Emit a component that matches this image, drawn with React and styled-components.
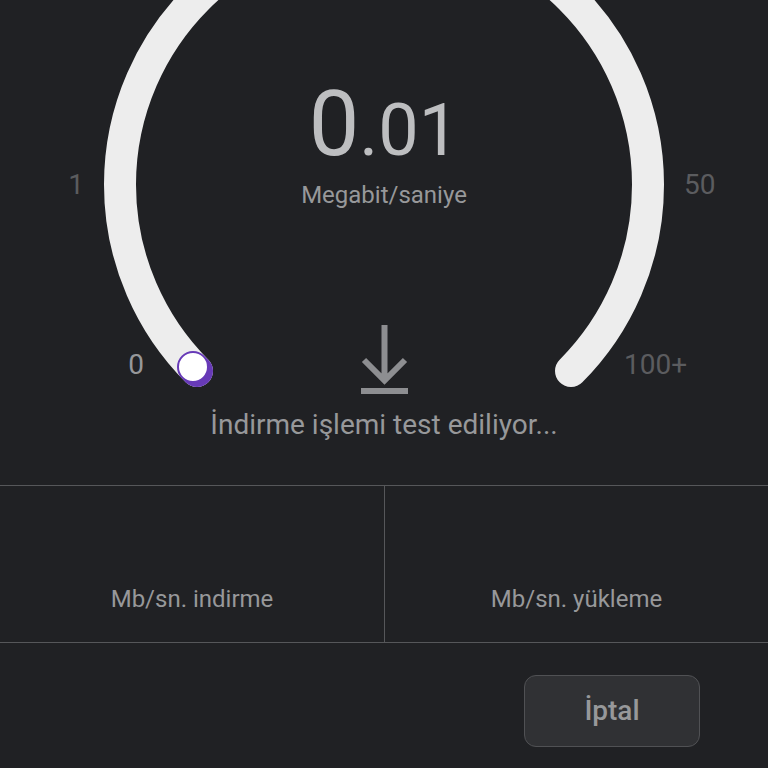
import styled, { createGlobalStyle } from 'styled-components'

const GlobalStyle = createGlobalStyle`
    * {
        box-sizing: border-box;
    }

    body {
        margin: 0;
        background-color: #202124;
        color: #97989a;
        font-family: Roboto, "Liberation Sans", sans-serif;
    }
`

const Page = styled.main`
    display: flex;
    flex-direction: column;
    min-height: 100vh;
    overflow: hidden;
`

/* every child of the gauge shares the same cell */
const Gauge = styled.section`
    display: grid;
    justify-items: center;
    align-items: start;

    > * {
        grid-area: 1 / 1;
    }
`

const Dial = styled.svg`
    width: 560px;
    height: 400px;
`

const Scale = styled.div`
    display: flex;
    flex-direction: column;
    gap: 148px;
    padding-top: 169px;
`

const ScaleRow = styled.div`
    display: flex;
    justify-content: center;
    gap: ${({ $gap }) => $gap}px;
`

const ScaleLabel = styled.span`
    width: 72px;
    font-size: 28px;
    line-height: 32px;
    text-align: ${({ $side }) => $side};
    color: ${({ $reached }) => ($reached ? '#97989a' : '#5b5c5f')};
`

const Readout = styled.div`
    display: flex;
    flex-direction: column;
    align-items: center;
    padding-top: 73px;
`

const Speed = styled.output`
    font-size: 72px;
    line-height: 104px;
    color: #bdbec0;
`

const SpeedWhole = styled.span`
    font-size: 90px;
`

const Unit = styled.span`
    font-size: 24px;
    line-height: 24px;
`

const Direction = styled.svg`
    width: 48px;
    height: 72px;
    margin-top: 117px;
    fill: none;
    stroke: #8d8e91;
    stroke-width: 6;
`

const Status = styled.p`
    margin: 0;
    padding: 11px 0 42px;
    font-size: 28px;
    line-height: 36px;
`

const Results = styled.section`
    display: grid;
    grid-template-columns: 1fr 1fr;
    border-top: 1px solid #56575a;
    border-bottom: 1px solid #56575a;
`

const Result = styled.div`
    display: flex;
    flex-direction: column;
    justify-content: flex-end;
    align-items: center;
    min-height: 156px;
    padding-bottom: 27px;
    font-size: 24px;
    line-height: 32px;

    & + & {
        border-left: 1px solid #56575a;
    }
`

const Footer = styled.footer`
    display: flex;
    justify-content: flex-end;
    padding: 32px 68px 20px;
`

const CancelButton = styled.button`
    width: 176px;
    height: 72px;
    padding-bottom: 2px;
    border: 1px solid #505154;
    border-radius: 12px;
    background-color: #303134;
    color: #97989a;
    font-family: inherit;
    font-size: 28px;
    font-weight: 500;
`

const SpeedGauge = () => {
    return (
        <Gauge>
            <Dial viewBox="0 0 560 400" aria-hidden="true">
                <path
                    d="M93 371A264 264 0 1 1 467 371"
                    fill="none"
                    stroke="#ededed"
                    strokeWidth="32"
                    strokeLinecap="round"
                />
                <circle cx="93" cy="371" r="16" fill="#673ab7" />
                <circle cx="89" cy="367" r="15" fill="#fff" stroke="#673ab7" strokeWidth="2" />
            </Dial>
            <Scale>
                <ScaleRow $gap={600}>
                    <ScaleLabel $side="right">1</ScaleLabel>
                    <ScaleLabel $side="left">50</ScaleLabel>
                </ScaleRow>
                <ScaleRow $gap={480}>
                    <ScaleLabel $side="right" $reached>0</ScaleLabel>
                    <ScaleLabel $side="left">100+</ScaleLabel>
                </ScaleRow>
            </Scale>
            <Readout>
                <Speed><SpeedWhole>0</SpeedWhole>.01</Speed>
                <Unit>Megabit/saniye</Unit>
                <Direction viewBox="0 0 48 72" aria-hidden="true">
                    <path d="M24.5 1V57M4 36L24.5 56.5L45 36M1 67H48" />
                </Direction>
                <Status>İndirme işlemi test ediliyor...</Status>
            </Readout>
        </Gauge>
    )
}

const App = () => {
    return (
        <>
            <GlobalStyle />
            <Page lang="tr">
                <SpeedGauge />
                <Results>
                    <Result>Mb/sn. indirme</Result>
                    <Result>Mb/sn. yükleme</Result>
                </Results>
                <Footer>
                    <CancelButton type="button">İptal</CancelButton>
                </Footer>
            </Page>
        </>
    )
}

export default App
